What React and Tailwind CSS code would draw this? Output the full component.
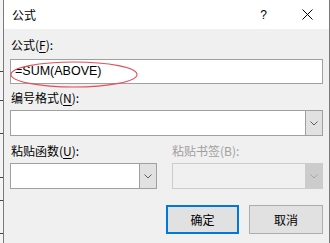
import React from "react";

const F = { fontFamily: '"Noto Sans CJK SC", "Noto Sans", sans-serif' };

function Arrow({ color = "#606060" }) {
  return (
    <svg width="8" height="5" viewBox="0 0 8 5">
      <path d="M0.5 0.5 L4 4 L7.5 0.5" fill="none" stroke={color} strokeWidth="1" />
    </svg>
  );
}

function Combo({ w, disabled }) {
  return (
    <div
      className={`flex h-[26px] border ${disabled ? "border-[#cccccc] bg-[#f0f0f0]" : "border-[#a0a0a0] bg-white"}`}
      style={w ? { width: w } : undefined}
    >
      <div className="flex-1" />
      <div
        className={`w-[17px] flex items-center justify-center border-l ${disabled ? "bg-[#cccccc] border-[#cccccc]" : "bg-[#e1e1e1] border-[#a0a0a0]"}`}
      >
        <Arrow color={disabled ? "#a6a6a6" : "#606060"} />
      </div>
    </div>
  );
}

export default function App() {
  return (
    <div className="w-[330px] h-[243px] flex overflow-hidden bg-white text-black" style={F}>
      <div className="relative w-[3px] h-full bg-[#f4f4f4]">
        {[71, 100, 133, 177, 200, 233].map((y) => (
          <div key={y} className="absolute left-0 w-[3px] h-[1px] bg-[#444]" style={{ top: y }} />
        ))}
      </div>
      <div className="flex-1 flex flex-col border-l border-r border-[#7a7a7a] bg-[#f0f0f0]">
        <div className="h-[29px] bg-white flex items-center pl-[8px] shrink-0">
          <span className="text-[12px] leading-none">公式</span>
          <span className="ml-auto text-[12px] leading-none mr-[35px]" style={{ fontFamily: '"Liberation Sans", sans-serif' }}>?</span>
          <svg width="11" height="11" viewBox="0 0 11 11" className="mr-[16px]">
            <path d="M0.5 0.5 L10.5 10.5 M10.5 0.5 L0.5 10.5" stroke="#000" strokeWidth="1" />
          </svg>
        </div>
        <div className="flex flex-col px-[6px] pt-[8px]">
          <div className="h-[16px] text-[12px] leading-[16px] pl-[1px]">
            公式(<span className="underline underline-offset-2">F</span>):
          </div>
          <div className="relative mt-[6px] h-[25px] border border-[#a0a0a0] bg-white flex items-center pl-[4px]">
            <span className="text-[12.5px] leading-none" style={{ fontFamily: '"Liberation Sans", sans-serif' }}>
              =SUM(ABOVE)
            </span>
            <svg className="absolute left-[-1px] top-[1px] overflow-visible" width="128" height="27" viewBox="0 0 128 27">
              <ellipse cx="64" cy="13.5" rx="63" ry="12.5" fill="none" stroke="#e4505c" strokeWidth="1.1" />
            </svg>
          </div>
          <div className="mt-[6px] h-[16px] text-[12px] leading-[16px] pl-[1px]">
            编号格式(<span className="underline underline-offset-2">N</span>):
          </div>
          <div className="mt-[4px]">
            <Combo />
          </div>
          <div className="mt-[7px] flex gap-[15px]">
            <div className="w-[147px] flex flex-col">
              <div className="h-[16px] text-[12px] leading-[16px] pl-[1px]">
                粘贴函数(<span className="underline underline-offset-2">U</span>):
              </div>
              <div className="mt-[4px]">
                <Combo />
              </div>
            </div>
            <div className="flex-1 flex flex-col">
              <div className="h-[16px] text-[12px] leading-[16px] text-[#a0a0a0]">粘贴书签(B):</div>
              <div className="mt-[4px]">
                <Combo disabled />
              </div>
            </div>
          </div>
          <div className="mt-[16px] flex justify-end gap-[10px] pr-[0px]">
            <button className="w-[73px] h-[29px] border-2 border-[#0078d7] bg-[#e1e1e1] text-[12px] leading-none flex items-center justify-center">
              确定
            </button>
            <button className="w-[74px] h-[29px] border border-[#adadad] bg-[#e1e1e1] text-[12px] leading-none flex items-center justify-center">
              取消
            </button>
          </div>
        </div>
      </div>
    </div>
  );
}
